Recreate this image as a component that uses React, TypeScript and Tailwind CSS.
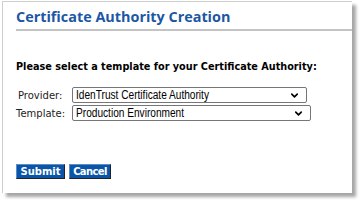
import { ChevronDown } from 'lucide-react';

function Select({ value, width }: { value: string; width: string }) {
  return (
    <div className={`${width} h-[16px] border border-[#767676] rounded-[2px] bg-white flex items-center justify-between pl-[3px] pr-[6px] overflow-hidden`}>
      <span className="text-[12.5px] leading-none text-black font-['Liberation_Sans',Arial,sans-serif] scale-x-[0.81] origin-left whitespace-nowrap">{value}</span>
      <ChevronDown size={11} strokeWidth={3.5} className="text-black shrink-0" />
    </div>
  );
}

function Button({ label, width, tight }: { label: string; width: string; tight?: boolean }) {
  return (
    <button className={`${width} h-[15px] bg-[#0b55a8] text-white text-[10px] leading-none font-bold font-['DejaVu_Sans',Verdana,sans-serif] border border-t-[#5a8ccc] border-l-[#5a8ccc] border-r-[#222] border-b-[#222] ${tight ? 'tracking-[-0.6px]' : ''}`}>
      {label}
    </button>
  );
}

export default function App() {
  return (
    <div className="w-[362px] h-[201px] bg-white pt-[1px] pl-[2px]">
      <div className="w-[350px] h-[192px] bg-white border-l border-t border-[#cfcfcf] shadow-[4px_4px_3px_rgba(0,0,0,0.35)] pl-[13px] pr-0">
        <h1 className="pt-[6px] text-[#1b57a5] text-[14.4px] font-bold leading-[18px] font-['Open_Sans',sans-serif]">
          Certificate Authority Creation
        </h1>
        <div className="mt-[3px] h-[2px] bg-[#c4c4c4]" />
        <p className="mt-[30px] text-[9.7px] leading-[12px] font-bold text-black font-['DejaVu_Sans',Verdana,sans-serif]">
          Please select a template for your Certificate Authority:
        </p>
        <div className="mt-[14px] flex flex-col gap-[2px] font-['DejaVu_Sans',Verdana,sans-serif] text-[10px] text-[#222]">
          <div className="flex items-center">
            <span className="w-[56px] pl-[2px]">Provider:</span>
            <Select value="IdenTrust Certificate Authority" width="w-[235px]" />
          </div>
          <div className="flex items-center">
            <span className="w-[56px]">Template:</span>
            <Select value="Production Environment" width="w-[239px]" />
          </div>
        </div>
        <div className="mt-[43px] flex gap-[4px]">
          <Button label="Submit" width="w-[49px]" />
          <Button label="Cancel" width="w-[42px]" tight />
        </div>
      </div>
    </div>
  );
}
